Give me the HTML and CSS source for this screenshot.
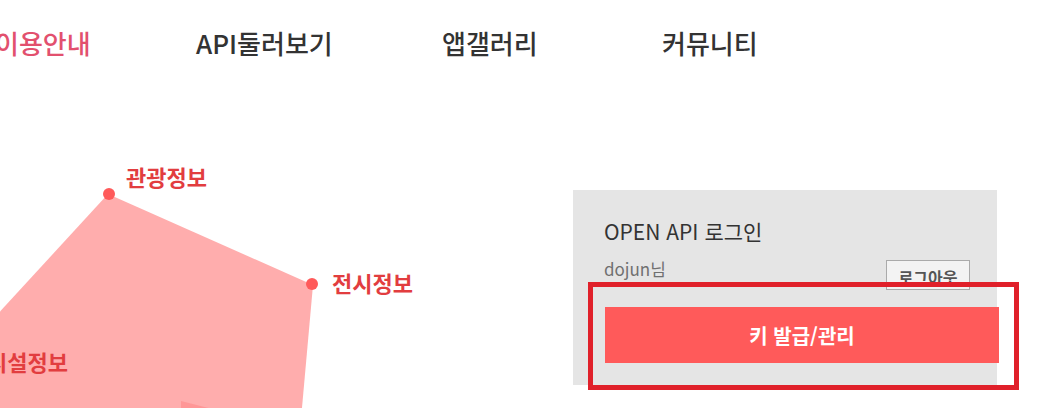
FILE: index.html
```html
<!DOCTYPE html>
<html lang="ko">
<head>
<meta charset="utf-8">
<title>OPEN API</title>
<link rel="stylesheet" href="styles.css">
</head>
<body>
<header class="gnb">
  <a class="gnb-item active" href="#">이용안내</a>
  <a class="gnb-item" href="#">API둘러보기</a>
  <a class="gnb-item" href="#">앱갤러리</a>
  <a class="gnb-item" href="#">커뮤니티</a>
</header>
<main class="content">
  <div class="chart">
    <svg class="chart-svg" width="573" height="318" viewBox="0 90 573 318" xmlns="http://www.w3.org/2000/svg">
      <polygon points="108,194 313,285 300,430 -50,430 -50,366" fill="#ffadad"/>
      <polygon points="181,401 232,414 181,414" fill="#ff9797"/>
      <circle cx="109" cy="194" r="6" fill="#ff5a5a"/>
      <circle cx="312" cy="284" r="6" fill="#ff5a5a"/>
      <text class="chart-label" x="126" y="186">관광정보</text>
      <text class="chart-label" x="332" y="292">전시정보</text>
      <text class="chart-label" x="68" y="371" text-anchor="end">시설정보</text>
    </svg>
  </div>
  <section class="login">
    <h2 class="login-title">OPEN API 로그인</h2>
    <div class="login-user">
      <span class="user-name">dojun님</span>
      <button class="logout-btn" type="button">로그아웃</button>
    </div>
    <button class="key-btn" type="button">키 발급/관리</button>
    <div class="highlight"></div>
  </section>
</main>
</body>
</html>
```
FILE: styles.css
```css
html, body {
  margin: 0;
  padding: 0;
  background: #ffffff;
  overflow: hidden;
}

body {
  font-family: "Noto Sans CJK KR", "Noto Sans", sans-serif;
  color: #333333;
}

.gnb {
  display: grid;
  grid-template-columns: 201px 246px 220px auto;
  margin-left: -5px;
  padding-top: 30px;
  height: 60px;
}

.gnb-item {
  font-size: 26px;
  line-height: 26px;
  font-weight: 500;
  color: #333333;
  text-decoration: none;
  white-space: nowrap;
}

.gnb-item.active {
  color: #e2506e;
}

.content {
  display: flex;
  align-items: flex-start;
}

.chart {
  width: 573px;
  height: 318px;
  flex: none;
}

.chart-svg {
  display: block;
}

.chart-label {
  font-family: "Noto Sans CJK KR", "Noto Sans", sans-serif;
  font-size: 22px;
  font-weight: 700;
  fill: #e23d3f;
}

.login {
  position: relative;
  box-sizing: border-box;
  width: 424px;
  height: 195px;
  margin-top: 100px;
  padding: 27px 0 0 31px;
  background: #e5e5e5;
}

.login-title {
  margin: 0;
  font-size: 21px;
  line-height: 28px;
  font-weight: 400;
  color: #333333;
}

.login-user {
  display: flex;
  justify-content: space-between;
  align-items: flex-start;
  margin-top: 15px;
  padding-right: 27px;
}

.user-name {
  margin-top: -2px;
  font-size: 17px;
  line-height: 22px;
  color: #707070;
}

.logout-btn {
  box-sizing: border-box;
  width: 84px;
  height: 30px;
  padding: 4px 0 0;
  border: 1px solid #aaaaaa;
  background: #f3f3f3;
  font-family: "Noto Sans CJK KR", sans-serif;
  font-size: 16px;
  line-height: 22px;
  font-weight: 700;
  color: #555555;
}

.key-btn {
  display: block;
  box-sizing: border-box;
  width: calc(100% + 1px);
  height: 56px;
  margin: 17px 0 0 1px;
  padding: 0;
  border: none;
  background: #ff5a5a;
  font-family: "Noto Sans CJK KR", sans-serif;
  font-size: 20px;
  font-weight: 700;
  color: #ffffff;
}

.highlight {
  position: absolute;
  left: 15px;
  top: 92px;
  width: 431px;
  height: 108px;
  box-sizing: border-box;
  border: 5px solid #e0202a;
  pointer-events: none;
}
```
